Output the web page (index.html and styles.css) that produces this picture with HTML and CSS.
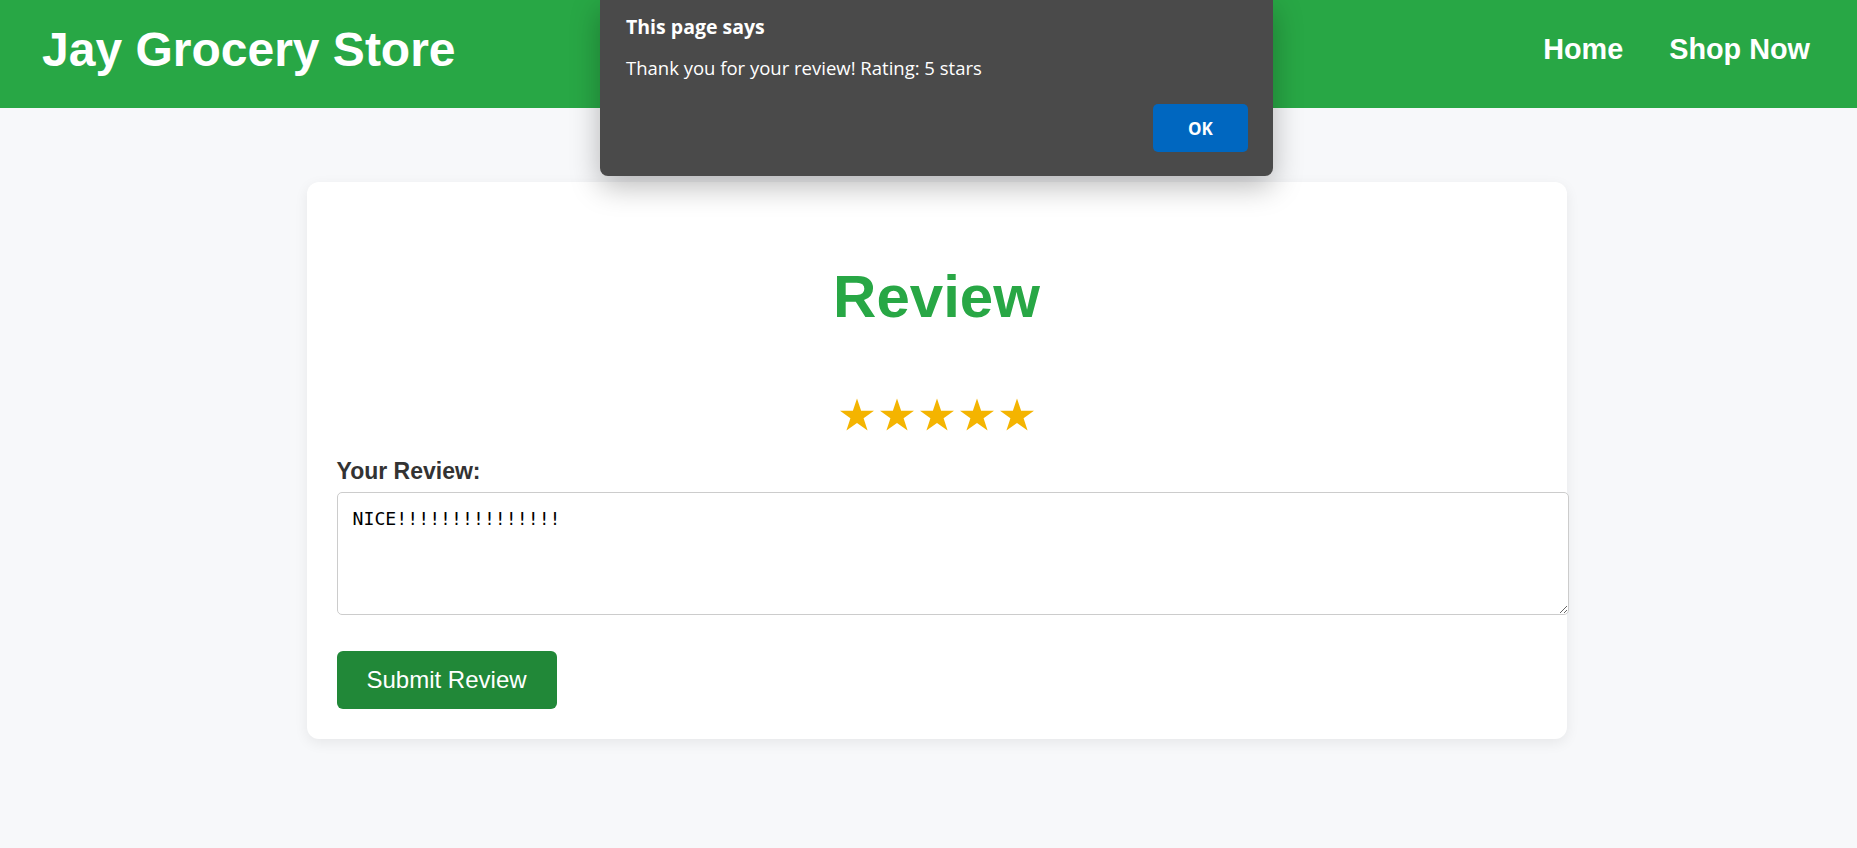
FILE: index.html
```html
<!DOCTYPE html>
<html lang="en">
<head>
<meta charset="utf-8">
<title>Review - Jay Grocery Store</title>
<link rel="stylesheet" href="styles.css">
</head>
<body>
<header class="site-header">
  <h1 class="brand">Jay Grocery Store</h1>
  <nav class="nav">
    <a class="nav-link" href="#">Home</a>
    <a class="nav-link" href="#">Shop Now</a>
  </nav>
</header>

<main class="main">
  <section class="card">
    <h2 class="card-title">Review</h2>
    <div class="stars">
      <svg class="star" viewBox="1.5 0 97 92"><polygon points="50,0 61.8,35.1 98.5,35.1 68.8,56.8 80.2,91.9 50,70.2 19.8,91.9 31.2,56.8 1.5,35.1 38.2,35.1"/></svg>
      <svg class="star" viewBox="1.5 0 97 92"><polygon points="50,0 61.8,35.1 98.5,35.1 68.8,56.8 80.2,91.9 50,70.2 19.8,91.9 31.2,56.8 1.5,35.1 38.2,35.1"/></svg>
      <svg class="star" viewBox="1.5 0 97 92"><polygon points="50,0 61.8,35.1 98.5,35.1 68.8,56.8 80.2,91.9 50,70.2 19.8,91.9 31.2,56.8 1.5,35.1 38.2,35.1"/></svg>
      <svg class="star" viewBox="1.5 0 97 92"><polygon points="50,0 61.8,35.1 98.5,35.1 68.8,56.8 80.2,91.9 50,70.2 19.8,91.9 31.2,56.8 1.5,35.1 38.2,35.1"/></svg>
      <svg class="star" viewBox="1.5 0 97 92"><polygon points="50,0 61.8,35.1 98.5,35.1 68.8,56.8 80.2,91.9 50,70.2 19.8,91.9 31.2,56.8 1.5,35.1 38.2,35.1"/></svg>
    </div>
    <label class="field-label" for="review">Your Review:</label>
    <textarea id="review" class="review-input">NICE!!!!!!!!!!!!!!!</textarea>
    <button class="submit-btn" type="button">Submit Review</button>
  </section>
</main>

<div class="dialog" role="alertdialog">
  <div class="dialog-title">This page says</div>
  <div class="dialog-msg">Thank you for your review! Rating: 5 stars</div>
  <div class="dialog-actions">
    <button class="dialog-ok" type="button">OK</button>
  </div>
</div>
</body>
</html>
```

FILE: styles.css
```css
html, body {
  margin: 0;
  padding: 0;
}

body {
  background: #f7f8fa;
  font-family: "Liberation Sans", Arial, sans-serif;
  color: #333;
  min-height: 848px;
  position: relative;
}

.site-header {
  box-sizing: border-box;
  height: 108px;
  background: #28a745;
  display: flex;
  align-items: center;
  justify-content: space-between;
  padding: 0 47px 9px 42px;
}

.brand {
  margin: 0;
  font-size: 48px;
  font-weight: bold;
  color: #fff;
}

.nav {
  display: flex;
  gap: 46px;
}

.nav-link {
  color: #fff;
  text-decoration: none;
  font-weight: bold;
  font-size: 28.8px;
}

.main {
  padding: 74px 0 0 16px;
}

.card {
  box-sizing: border-box;
  width: 1260px;
  margin: 0 auto;
  background: #fff;
  border-radius: 12px;
  padding: 30px;
  box-shadow: 0 4px 14px rgba(0, 0, 0, 0.07);
}

.card-title {
  margin: 50px 0 46px;
  text-align: center;
  font-size: 60px;
  font-weight: bold;
  color: #28a745;
}

.stars {
  display: flex;
  justify-content: center;
  gap: 6px;
  margin: 67px 0 27px;
}

.star {
  display: block;
  width: 34px;
  height: 33px;
  fill: #f4b400;
}

.field-label {
  display: block;
  font-size: 23px;
  font-weight: bold;
  color: #333;
  margin-bottom: 7px;
}

.review-input {
  display: block;
  width: 100%;
  height: 91px;
  padding: 15px;
  border: 1px solid #ccc;
  border-radius: 5px;
  font-family: "DejaVu Sans Mono", monospace;
  font-size: 18.2px;
  color: #000;
  background: #fff;
  resize: vertical;
  margin: 0;
}

.submit-btn {
  margin-top: 36px;
  display: block;
  background: #218838;
  color: #fff;
  border: none;
  border-radius: 6px;
  padding: 15px 30px;
  font-family: "Liberation Sans", Arial, sans-serif;
  font-size: 24px;
  line-height: 28px;
}

.dialog {
  position: absolute;
  top: 0;
  left: 600px;
  width: 673px;
  height: 176px;
  box-sizing: border-box;
  background: #4a4a4a;
  border-radius: 0 0 8px 8px;
  box-shadow: 0 10px 30px rgba(0, 0, 0, 0.28);
  padding: 14px 25px 0 26px;
  font-family: "Open Sans", "Noto Sans", sans-serif;
  color: #fff;
}

.dialog-title {
  font-weight: bold;
  font-size: 19.5px;
  line-height: 26px;
}

.dialog-msg {
  margin-top: 15px;
  font-size: 18.5px;
  line-height: 26px;
}

.dialog-actions {
  display: flex;
  justify-content: flex-end;
  margin-top: 23px;
}

.dialog-ok {
  width: 95px;
  height: 48px;
  border: none;
  border-radius: 5px;
  background: #0067c0;
  color: #fff;
  font-family: "Open Sans", "Noto Sans", sans-serif;
  font-weight: bold;
  font-size: 17px;
}
```
